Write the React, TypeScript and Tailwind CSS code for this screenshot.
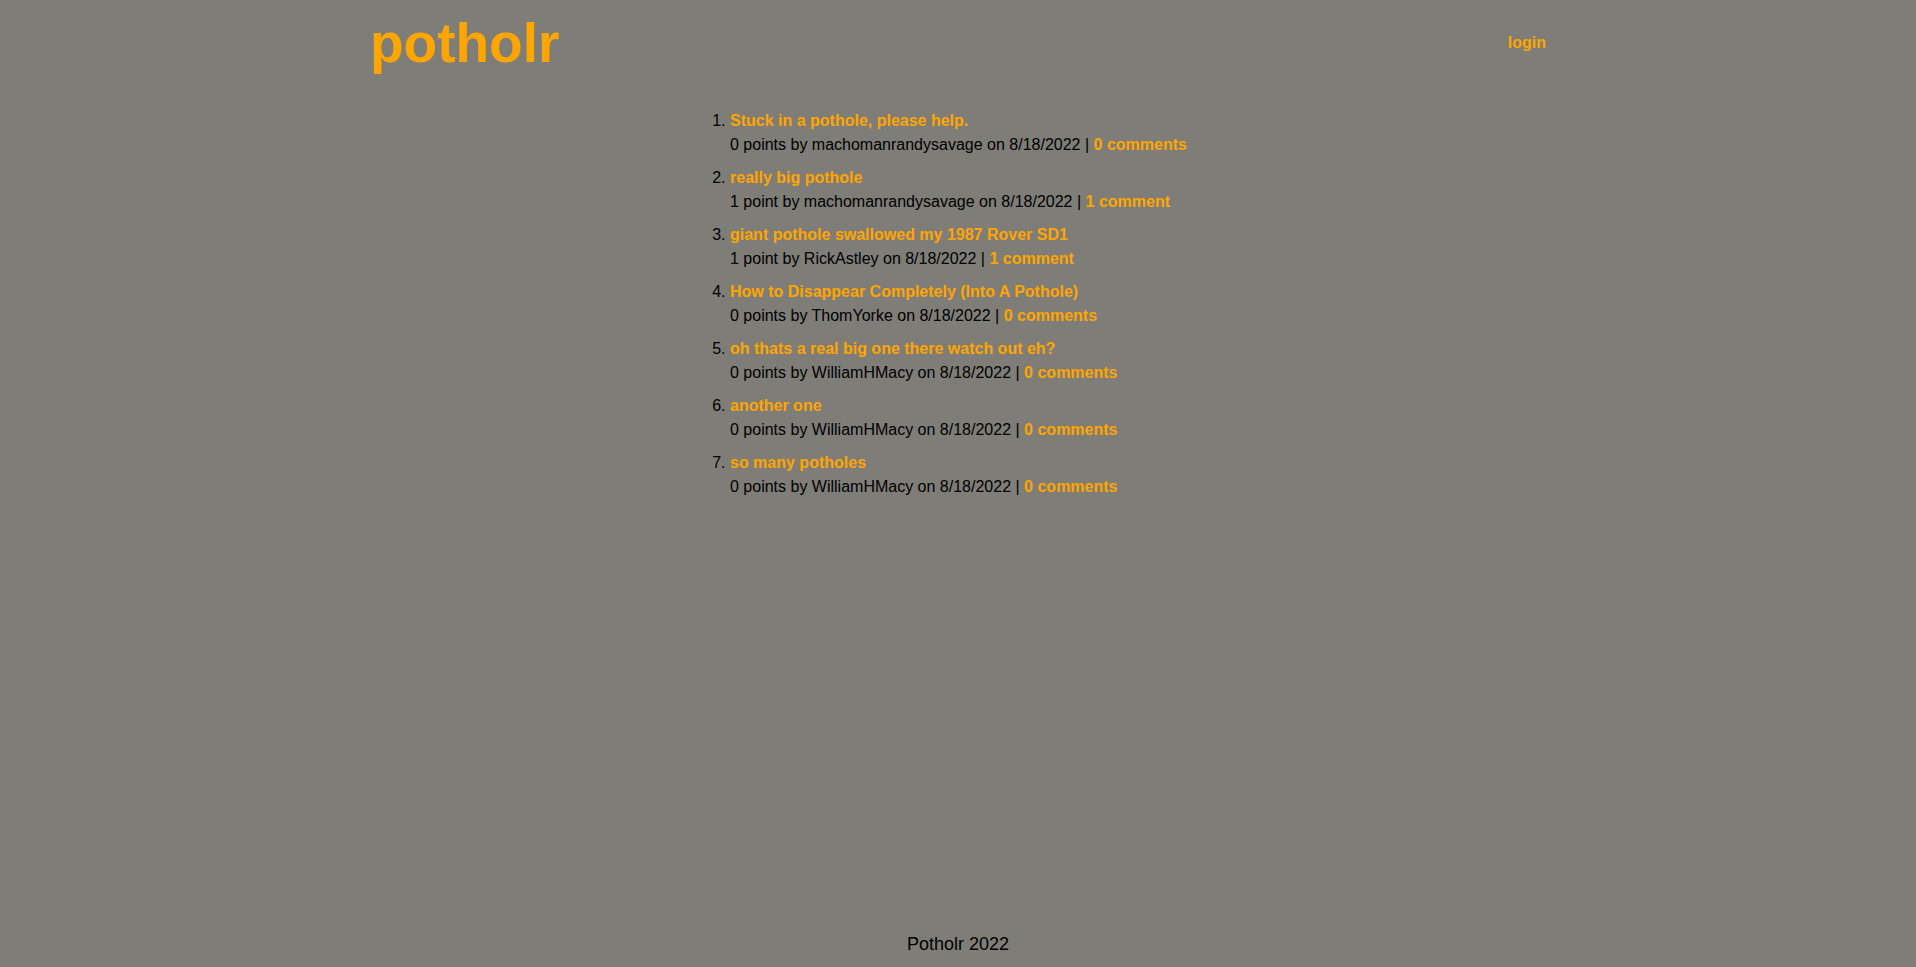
import React from 'react';

interface Post {
  id: number;
  title: string;
  points: number;
  author: string;
  date: string;
  comments: number;
}

const posts: Post[] = [
  { id: 1, title: 'Stuck in a pothole, please help.', points: 0, author: 'machomanrandysavage', date: '8/18/2022', comments: 0 },
  { id: 2, title: 'really big pothole', points: 1, author: 'machomanrandysavage', date: '8/18/2022', comments: 1 },
  { id: 3, title: 'giant pothole swallowed my 1987 Rover SD1', points: 1, author: 'RickAstley', date: '8/18/2022', comments: 1 },
  { id: 4, title: 'How to Disappear Completely (Into A Pothole)', points: 0, author: 'ThomYorke', date: '8/18/2022', comments: 0 },
  { id: 5, title: 'oh thats a real big one there watch out eh?', points: 0, author: 'WilliamHMacy', date: '8/18/2022', comments: 0 },
  { id: 6, title: 'another one', points: 0, author: 'WilliamHMacy', date: '8/18/2022', comments: 0 },
  { id: 7, title: 'so many potholes', points: 0, author: 'WilliamHMacy', date: '8/18/2022', comments: 0 },
];

function plural(n: number, word: string) {
  return `${n} ${word}${n === 1 ? '' : 's'}`;
}

function PostItem({ post }: { post: Post }) {
  return (
    <li className="mb-[9px] leading-6">
      <a href="#" className="font-bold text-[#ffa500]">
        {post.title}
      </a>
      <div>
        {plural(post.points, 'point')} by {post.author} on {post.date} |{' '}
        <a href="#" className="font-bold text-[#ffa500]">
          {plural(post.comments, 'comment')}
        </a>
      </div>
    </li>
  );
}

export default function App() {
  return (
    <div className="min-h-screen flex flex-col bg-[#7f7d77] text-black font-['Liberation_Sans',Arial,sans-serif]">
      <header className="w-[1176px] mx-auto flex justify-between items-start">
        <a href="#" className="mt-[12px] text-[55px] leading-[63px] font-bold text-[#ffa500]">
          potholr
        </a>
        <a href="#" className="mt-[31px] text-base leading-6 font-bold text-[#ffa500]">
          login
        </a>
      </header>
      <main>
        <ol className="list-decimal ml-[730px] mt-[34px] text-base">
          {posts.map(post => (
            <PostItem key={post.id} post={post} />
          ))}
        </ol>
      </main>
      <footer className="mt-auto pb-[9px] text-center text-[18px]">Potholr 2022</footer>
    </div>
  );
}
